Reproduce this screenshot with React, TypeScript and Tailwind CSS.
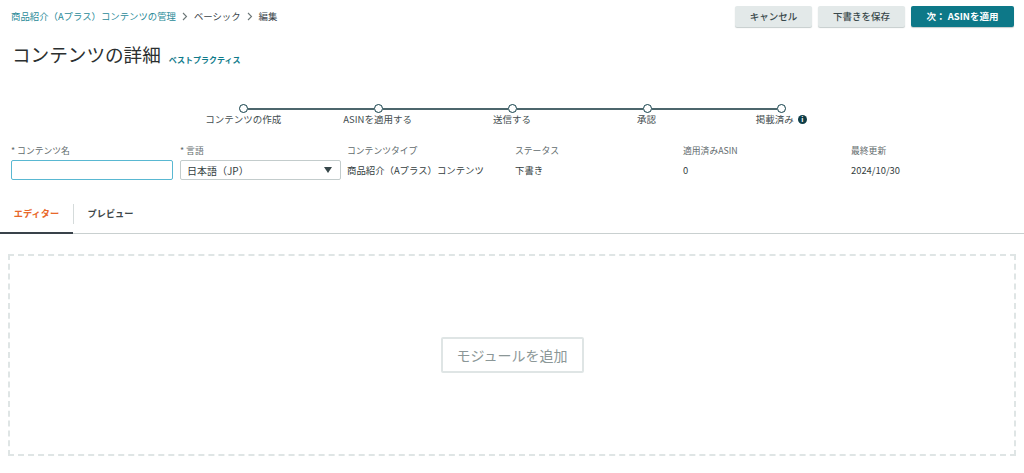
const fields = [
  { label: "コンテンツタイプ", value: "商品紹介（Aプラス）コンテンツ" },
  { label: "ステータス", value: "下書き" },
  { label: "適用済みASIN", value: "0" },
  { label: "最終更新", value: "2024/10/30" },
];

const steps = ["コンテンツの作成", "ASINを適用する", "送信する", "承認"];

function Chevron() {
  return (
    <svg width="6" height="9" viewBox="0 0 6 9" fill="none" className="mx-[6px]">
      <path d="M1 1l3.5 3.5L1 8" stroke="#6c7778" strokeWidth="1.1" />
    </svg>
  );
}

function Dot() {
  return <div className="h-[9px] w-[9px] shrink-0 rounded-full border-[1.5px] border-[#0f3d47] bg-white" />;
}

function Line() {
  return <div className="h-[2px] flex-1 bg-[#4c666c]" />;
}

export default function App() {
  return (
    <div className="h-[473px] w-[1024px] overflow-hidden bg-white font-['Noto_Sans_CJK_JP',sans-serif] text-[#333d3e]">
      <div className="flex h-[34px] items-start justify-between pl-[11px] pr-[10px] pt-[6px]">
        <div className="flex h-[21px] items-center text-[9.4px] text-[#39434a]">
          <span className="text-[#2a8a98]">商品紹介（Aプラス）コンテンツの管理</span>
          <Chevron />
          <span>ベーシック</span>
          <Chevron />
          <span>編集</span>
        </div>
        <div className="flex gap-[6px] text-[9.5px] font-medium">
          <button className="h-[21px] w-[77px] rounded-[2px] bg-[#e3e9e9] text-[#39484b] shadow-[0_1px_1px_#c5cccc]">キャンセル</button>
          <button className="h-[21px] w-[87px] rounded-[2px] bg-[#e3e9e9] text-[#39484b] shadow-[0_1px_1px_#c5cccc]">下書きを保存</button>
          <button className="h-[21px] w-[103px] rounded-[2px] bg-[#0d7888] font-bold text-white shadow-[0_1px_1px_#c5cccc]">次： ASINを適用</button>
        </div>
      </div>

      <div className="flex h-[44px] items-center pl-[12px]">
        <h1 className="mb-[4px] text-[18.6px] leading-none font-normal text-[#2b2f30]">コンテンツの詳細</h1>
        <a className="ml-[8px] mt-[8px] text-[8px] font-bold text-[#0f7a8a]">ベストプラクティス</a>
      </div>

      <div className="mt-[25px] flex justify-center">
        <div className="w-[672px]">
          <div className="flex h-[11px] items-center pl-[63px] pr-[62px]">
            <Dot />
            <Line />
            <Dot />
            <Line />
            <Dot />
            <Line />
            <Dot />
            <Line />
            <Dot />
          </div>
          <div className="-mt-[2px] grid grid-cols-5 text-center text-[9.5px] leading-[15px] text-[#434d4f]">
            {steps.map((s) => (
              <span key={s}>{s}</span>
            ))}
            <span className="flex items-center justify-center gap-[4px] pl-[1px]">
              掲載済み
              <span className="flex h-[9px] w-[9px] items-center justify-center rounded-full bg-[#0f3d47] text-[7px] font-bold leading-none text-white">i</span>
            </span>
          </div>
        </div>
      </div>

      <div className="mt-[16px] grid grid-cols-[168px_168px_168px_168px_168px_1fr] pl-[11px]">
        <div>
          <div className="h-[15px] text-[8.8px] leading-[15px] text-[#5f6b6d]">* コンテンツ名</div>
          <input className="mt-[2px] block h-[20px] w-[162px] rounded-[2px] border border-[#59b8d2] bg-white outline-none" />
        </div>
        <div className="pl-px">
          <div className="h-[15px] text-[8.8px] leading-[15px] text-[#5f6b6d]">* 言語</div>
          <div className="mt-[2px] flex h-[20px] w-[161px] items-center justify-between rounded-[2px] border border-[#c3cccc] pl-[6px] pr-[8px] text-[10px] text-[#333d3e]">
            <span>日本語（JP）</span>
            <svg width="8" height="6" viewBox="0 0 8 6">
              <path d="M0 0h8L4 6z" fill="#37474a" />
            </svg>
          </div>
        </div>
        {fields.map((f) => (
          <div key={f.label}>
            <div className="h-[15px] text-[8.8px] leading-[15px] text-[#5f6b6d]">{f.label}</div>
            <div className="mt-[2px] flex h-[20px] items-center text-[9.4px] text-[#333d3e]">{f.value}</div>
          </div>
        ))}
      </div>

      <div className="mt-[16px] flex h-[38px] border-b border-[#c9d0d0] text-[9.2px] font-bold">
        <div className="-mb-px flex w-[73px] items-center justify-center border-b-2 border-[#39424a] text-[#e8682a]">
          エディター
        </div>
        <div className="mt-[8px] flex h-[20px] w-[74px] items-center justify-center border-l border-[#d5dbdb] text-[#3e4749]">
          プレビュー
        </div>
      </div>

      <div className="mx-[8px] mt-[20px] flex h-[202px] items-center justify-center border-2 border-dashed border-[#dfe5e5]">
        <button className="h-[36px] w-[143px] rounded-[2px] border-2 border-[#dfe5e5] bg-white text-[14px] text-[#8b9797]">モジュールを追加</button>
      </div>
    </div>
  );
}
